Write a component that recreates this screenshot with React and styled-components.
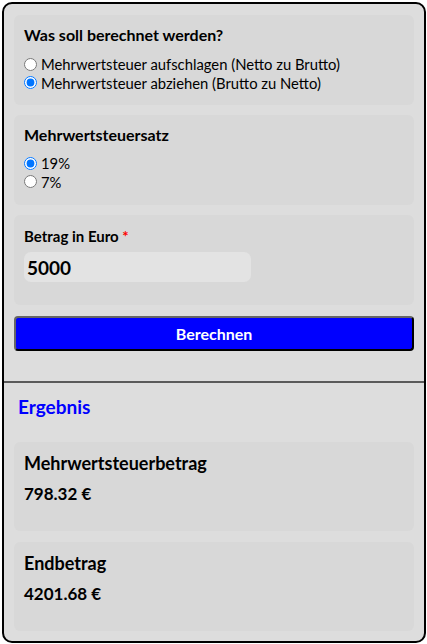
import styled, { createGlobalStyle } from "styled-components";

const GlobalStyle = createGlobalStyle`
  body {
    margin: 0;
    padding: 2px 1px 2px 2px;
    background: #ffffff;
    font-family: "Lato", "Open Sans", sans-serif;
    color: #000;
  }
`;

// styled Components

const Container = styled.div`
  border: 2px solid #000;
  border-radius: 10px;
  background-color: #dddddd;
  overflow: hidden;
`;

const Form = styled.form`
  display: flex;
  flex-direction: column;
  gap: 10px;
  padding: 11px 10px 30px;
`;

const Card = styled.div`
  background-color: #d8d8d8;
  border-radius: 6px;
  padding: ${(props) => props.$pad || "10px 10px"};
  min-height: ${(props) => props.$h || "90px"};
  box-sizing: border-box;
`;

const Legend = styled.div`
  font-size: 16px;
  font-weight: 700;
  margin: 0 0 ${(props) => props.$gap || "11px"};
`;

const Option = styled.label`
  display: flex;
  align-items: center;
  font-size: 14.8px;
  line-height: 18.5px;

  input {
    margin: 0 4px 0 0;
    width: 13px;
    height: 13px;
  }
`;

const Label = styled.div`
  font-size: 15px;
  font-weight: 700;
  margin: 2px 0 7px;

  span {
    color: #ff0000;
  }
`;

const Input = styled.input`
  width: 227px;
  height: 30px;
  box-sizing: border-box;
  border: none;
  border-radius: 7px;
  background-color: #e3e3e3;
  padding: 0 3px;
  font-family: inherit;
  font-size: 19px;
  font-weight: 700;
  color: #000;
  outline: none;
`;

const Button = styled.button`
  height: 35px;
  margin-top: 1px;
  border: 2px solid;
  border-color: #666 #000 #000 #666;
  border-radius: 4px;
  background-color: #0000ff;
  color: #ffffff;
  font-family: inherit;
  font-size: 16px;
  font-weight: 700;
`;

const Results = styled.section`
  border-top: 2px solid #5a5a5a;
  padding: 12px 10px 10px;
  display: flex;
  flex-direction: column;
  gap: 11px;
`;

const Heading = styled.h2`
  margin: 0 0 13px 4px;
  font-size: 19px;
  line-height: 23px;
  font-weight: 700;
  color: #0000ff;
`;

const ResultTitle = styled.h3`
  margin: 0 0 9px;
  font-size: 18px;
  font-weight: 700;
`;

const ResultValue = styled.p`
  margin: 0;
  font-size: 17px;
  font-weight: 700;
`;

const ResultCard = ({ title, value }) => (
  <Card $pad="10px 10px" $h="89px">
    <ResultTitle>{title}</ResultTitle>
    <ResultValue>{value}</ResultValue>
  </Card>
);

const App = () => {
  return (
    <>
      <GlobalStyle />
      <Container>
        <Form onSubmit={(e) => e.preventDefault()}>
          <Card>
            <Legend>Was soll berechnet werden?</Legend>
            <Option>
              <input type="radio" name="mode" />
              Mehrwertsteuer aufschlagen (Netto zu Brutto)
            </Option>
            <Option>
              <input type="radio" name="mode" defaultChecked />
              Mehrwertsteuer abziehen (Brutto zu Netto)
            </Option>
          </Card>
          <Card>
            <Legend $gap="10px">Mehrwertsteuersatz</Legend>
            <Option>
              <input type="radio" name="rate" defaultChecked />
              19%
            </Option>
            <Option>
              <input type="radio" name="rate" />
              7%
            </Option>
          </Card>
          <Card>
            <Label>
              Betrag in Euro <span>*</span>
            </Label>
            <Input defaultValue="5000" />
          </Card>
          <Button type="submit">Berechnen</Button>
        </Form>
        <Results>
          <Heading>Ergebnis</Heading>
          <ResultCard title="Mehrwertsteuerbetrag" value="798.32 €" />
          <ResultCard title="Endbetrag" value="4201.68 €" />
        </Results>
      </Container>
    </>
  );
};

export default App;
